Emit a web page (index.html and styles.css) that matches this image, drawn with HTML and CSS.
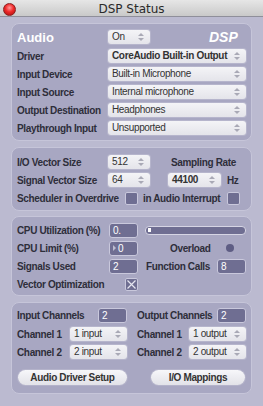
FILE: index.html
```html
<!DOCTYPE html>
<html>
	<head>
		<meta charset="UTF-8">
		<title>DSP Status</title>
		<link rel="stylesheet" href="styles.css">
	</head>
	<body>
		<div class="titlebar">
			<span class="close"></span>
			<span class="title">DSP Status</span>
		</div>

		<div class="panel p1">
			<div class="row audio">
				<span class="lbl big">Audio</span>
				<span class="pop w42">On<i class="arr"></i></span>
				<span class="dsp">DSP</span>
			</div>
			<div class="row">
				<span class="lbl">Driver</span>
				<span class="pop w138 bold">CoreAudio Built-in Output<i class="arr"></i></span>
			</div>
			<div class="row">
				<span class="lbl">Input Device</span>
				<span class="pop w138">Built-in Microphone<i class="arr"></i></span>
			</div>
			<div class="row">
				<span class="lbl">Input Source</span>
				<span class="pop w138">Internal microphone<i class="arr"></i></span>
			</div>
			<div class="row">
				<span class="lbl">Output Destination</span>
				<span class="pop w138">Headphones<i class="arr"></i></span>
			</div>
			<div class="row">
				<span class="lbl">Playthrough Input</span>
				<span class="pop w138">Unsupported<i class="arr"></i></span>
			</div>
		</div>

		<div class="panel p2">
			<div class="row">
				<span class="lbl">I/O Vector Size</span>
				<span class="pop w42">512<i class="arr"></i></span>
				<span class="lbl sr">Sampling Rate</span>
			</div>
			<div class="row">
				<span class="lbl">Signal Vector Size</span>
				<span class="pop w42">64<i class="arr"></i></span>
				<span class="pop w53 bold sr2">44100<i class="arr"></i></span>
				<span class="lbl hz">Hz</span>
			</div>
			<div class="row">
				<span class="lbl w108">Scheduler in Overdrive</span>
				<span class="chk"></span>
				<span class="lbl intr">in Audio Interrupt</span>
				<span class="chk"></span>
			</div>
		</div>

		<div class="panel p3">
			<div class="row">
				<span class="lbl w92">CPU Utilization (%)</span>
				<span class="num">0.</span>
				<span class="bar"><i></i></span>
			</div>
			<div class="row">
				<span class="lbl w92">CPU Limit (%)</span>
				<span class="num"><b class="tri"></b>0</span>
				<span class="lbl ovl">Overload</span>
				<span class="led"></span>
			</div>
			<div class="row">
				<span class="lbl w92">Signals Used</span>
				<span class="num">2</span>
				<span class="lbl fc">Function Calls</span>
				<span class="num">8</span>
			</div>
			<div class="row">
				<span class="lbl w108">Vector Optimization</span>
				<span class="chk on">
					<svg width="11" height="11" viewBox="0 0 11 11"><path d="M1.5 1.5L9.5 9.5M9.5 1.5L1.5 9.5" stroke="#e6e6f0" stroke-width="1.2"/></svg>
				</span>
			</div>
		</div>

		<div class="panel p4">
			<div class="row">
				<span class="lbl w81">Input Channels</span>
				<span class="num">2</span>
				<span class="lbl oc">Output Channels</span>
				<span class="num">2</span>
			</div>
			<div class="row r2">
				<span class="lbl w53">Channel 1</span>
				<span class="pop w57">1 input<i class="arr"></i></span>
				<span class="lbl ch">Channel 1</span>
				<span class="pop w57">1 output<i class="arr"></i></span>
			</div>
			<div class="row">
				<span class="lbl w53">Channel 2</span>
				<span class="pop w57">2 input<i class="arr"></i></span>
				<span class="lbl ch">Channel 2</span>
				<span class="pop w57">2 output<i class="arr"></i></span>
			</div>
			<div class="row btns">
				<span class="btn b1">Audio Driver Setup</span>
				<span class="btn b2">I/O Mappings</span>
			</div>
		</div>
	</body>
</html>
```

FILE: styles.css
```css
*{margin:0;padding:0;box-sizing:border-box;}
body{
	width:263px;
	height:406px;
	overflow:hidden;
	background:#bbbad0;
	font-family:"Liberation Sans", Arial, sans-serif;
	font-size:10px;
	letter-spacing:-0.35px;
	color:#2e2e3a;
}
.titlebar{
	height:17px;
	background:linear-gradient(#e6e6e6,#c9c9c9);
	border-bottom:1px solid #8f8f9a;
	display:flex;
	align-items:center;
	justify-content:center;
	position:relative;
}
.close{
	position:absolute;
	left:3px;
	top:3px;
	width:13px;
	height:13px;
	border-radius:50%;
	background:radial-gradient(circle at 50% 35%,#ff9a9a 0,#f02a2a 45%,#a50c0c 100%);
	border:1px solid #8a2020;
}
.title{
	font-family:"DejaVu Sans", sans-serif;
	font-size:12px;
	letter-spacing:0;
	color:#2a2a2a;
	margin-top:1px;
}
.panel{
	width:241px;
	margin-left:11px;
	background:#a8a7c2;
	border:1px solid #c6c5d9;
	border-radius:8px;
	padding-left:5px;
}
.p1{margin-top:6px;height:118px;padding-top:3px;}
.p2{margin-top:6px;height:64px;padding-top:5px;}
.p3{margin-top:5px;height:80px;padding-top:4px;}
.p4{margin-top:6px;height:92px;padding-top:3px;}
.row{
	display:flex;
	align-items:center;
	height:18px;
}
.audio{height:20px;}
.r2{margin-top:1px;}
.lbl{
	font-weight:bold;
	white-space:nowrap;
	width:91px;
	flex:none;
}
.big{font-size:13px;color:#fff;letter-spacing:0;}
.dsp{
	font-weight:bold;
	font-style:italic;
	font-size:14px;
	letter-spacing:0;
	color:#fff;
	margin-left:59px;
}
.pop{
	position:relative;
	height:14px;
	line-height:14px;
	padding-left:4px;
	background:linear-gradient(#f4f4f7,#e4e4ea);
	border-radius:3px;
	box-shadow:0 0 0 1px #b6b5cc;
	color:#333;
	white-space:nowrap;
	flex:none;
}
.pop.bold{font-weight:bold;}
.arr{
	position:absolute;
	right:6px;
	top:3px;
	width:6px;
	height:8px;
}
.arr:before,
.arr:after{
	content:"";
	position:absolute;
	left:0;
	border-left:3px solid transparent;
	border-right:3px solid transparent;
}
.arr:before{top:0;border-bottom:3px solid #a9a9b6;}
.arr:after{bottom:0;border-top:3px solid #a9a9b6;}
.w42{width:42px;}
.w53{width:53px;}
.w57{width:57px;}
.w138{width:138px;}
.sr{margin-left:21px;width:auto;}
.sr2{margin-left:18px;}
.hz{margin-left:6px;width:auto;}
.w108{width:108px;}
.w92{width:92px;}
.w81{width:81px;}
.w53.lbl{width:53px;}
.chk{
	width:13px;
	height:13px;
	background:#6f6e92;
	border:1px solid #c9c8dc;
	border-radius:2px;
	flex:none;
	display:flex;
	align-items:center;
	justify-content:center;
}
.intr{margin-left:5px;width:84px;}
.num{
	width:29px;
	height:15px;
	line-height:13px;
	background:#6f6e92;
	border:1px solid #c9c8dc;
	border-radius:3px;
	color:#fff;
	padding-left:3px;
	flex:none;
	display:flex;
	align-items:center;
}
.tri{
	width:0;
	height:0;
	border-left:3px solid #bdbdd0;
	border-top:3px solid transparent;
	border-bottom:3px solid transparent;
	margin-right:2px;
}
.bar{
	width:101px;
	height:9px;
	margin-left:7px;
	background:#6f6e92;
	border:1px solid #d6d5e4;
	border-radius:4px;
	display:flex;
	align-items:center;
	padding-left:2px;
	flex:none;
}
.bar i{width:3px;height:4px;background:#fff;}
.ovl{margin-left:32px;width:auto;}
.led{
	width:8px;
	height:8px;
	border-radius:50%;
	background:#5e5d84;
	margin-left:15px;
	flex:none;
}
.fc{margin-left:8px;width:71px;}
.oc{margin-left:10px;width:80px;}
.ch{margin-left:10px;width:52px;}
.btns{margin-top:7px;}
.btn{
	height:15px;
	line-height:15px;
	border-radius:8px;
	background:linear-gradient(#f7f7fa,#e2e2e8);
	box-shadow:0 0 0 1px #b4b3ca;
	text-align:center;
	font-weight:bold;
	color:#333;
	flex:none;
}
.b1{width:109px;margin-left:1px;}
.b2{width:94px;margin-left:24px;}
```
